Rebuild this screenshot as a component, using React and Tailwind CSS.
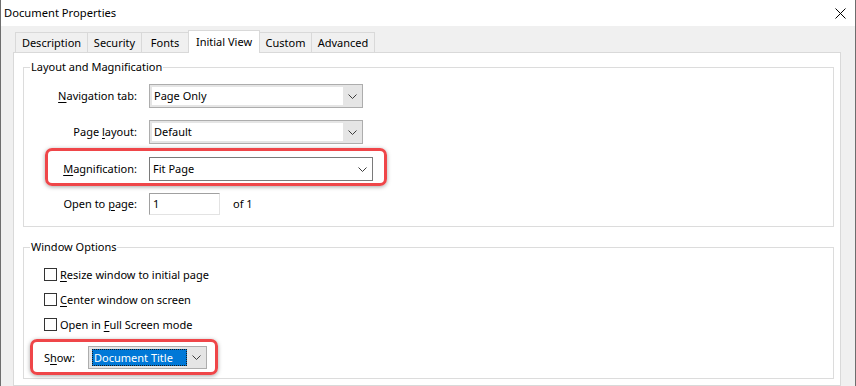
import React from "react";

const font = { fontFamily: '"Segoe UI", "Noto Sans", sans-serif' };

function Chevron() {
  return (
    <svg width="9" height="5" viewBox="0 0 9 5" className="block">
      <path d="M0.5 0.5 L4.5 4.5 L8.5 0.5" fill="none" stroke="#3c3c3c" strokeWidth="1" />
    </svg>
  );
}

function GraySelect({ value, width }) {
  return (
    <div className={`flex h-[24px] items-stretch border border-[#adadad] bg-[#e5e5e5] ${width}`}>
      <div className="my-[2px] ml-[2px] flex flex-1 items-center bg-white pl-[2px]">{value}</div>
      <div className="flex w-[19px] items-center justify-center">
        <Chevron />
      </div>
    </div>
  );
}

function U({ children }) {
  return <span className="underline underline-offset-[2px]">{children}</span>;
}

function Tab({ label, width, selected }) {
  if (selected) {
    return (
      <div
        className={`relative z-10 -mb-px -ml-px flex h-[23px] items-center justify-center border border-b-0 border-[#d9d9d9] bg-white pb-[1px] ${width}`}
      >
        {label}
      </div>
    );
  }
  return (
    <div
      className={`-ml-px flex h-[20px] items-center justify-center border border-b-0 border-[#d9d9d9] bg-[#f0f0f0] pt-[1px] first:ml-0 ${width}`}
    >
      {label}
    </div>
  );
}

function Checkbox({ children }) {
  return (
    <div className="flex h-[25px] items-center pl-[20px]">
      <div className="h-[13px] w-[13px] border border-[#333333] bg-white" />
      <span className="ml-[3px]">{children}</span>
    </div>
  );
}

export default function App() {
  return (
    <div
      style={font}
      className="relative flex h-[386px] w-[856px] flex-col overflow-hidden border-x border-[#6e6e6e] bg-[#f0f0f0] text-[11px] leading-[16px] text-black"
    >
      {/* Title bar */}
      <div className="flex h-[26px] shrink-0 items-center justify-between bg-white pl-[3px] pr-[9px]">
        <span className="text-[11.2px]">Document Properties</span>
        <svg width="11" height="11" viewBox="0 0 11 11" className="block">
          <path d="M0.5 0.5 L10.5 10.5 M10.5 0.5 L0.5 10.5" stroke="#000" strokeWidth="1" />
        </svg>
      </div>

      {/* Body */}
      <div className="flex flex-1 flex-col pl-[12px] pr-[14px] pt-[4px]">
        {/* Tabs */}
        <div className="flex h-[22px] shrink-0 items-end pl-[2px]">
          <Tab label="Description" width="w-[73px]" />
          <Tab label="Security" width="w-[55px]" />
          <Tab label="Fonts" width="w-[48px]" />
          <Tab label="Initial View" width="w-[72px]" selected />
          <Tab label="Custom" width="w-[53px]" />
          <Tab label="Advanced" width="w-[64px]" />
        </div>

        {/* Panel */}
        <div className="flex flex-1 flex-col border border-[#d9d9d9] bg-white pl-[9px] pr-[6px] pt-[6px]">
          {/* Layout and Magnification */}
          <fieldset className="border border-[#dcdcdc]">
            <legend className="ml-[6px] px-[1px] leading-[16px]">Layout and Magnification</legend>
            <div className="flex flex-col pb-[11px] pt-[9px]">
              <div className="flex h-[24px] items-center">
                <div className="w-[113px] text-right">
                  <U>N</U>avigation tab:
                </div>
                <div className="ml-[12px]">
                  <GraySelect value="Page Only" width="w-[214px]" />
                </div>
              </div>

              <div className="mt-[12px] flex h-[24px] items-center">
                <div className="w-[113px] text-right">
                  Page <U>l</U>ayout:
                </div>
                <div className="ml-[12px]">
                  <GraySelect value="Default" width="w-[214px]" />
                </div>
              </div>

              <div className="relative mt-[13px] flex h-[24px] items-center">
                <div className="w-[113px] text-right">
                  <U>M</U>agnification:
                </div>
                <div className="ml-[12px] flex h-[24px] w-[224px] items-center border border-[#7a7a7a] bg-white pl-[3px]">
                  <span className="flex-1">Fit Page</span>
                  <div className="flex w-[19px] items-center justify-center">
                    <Chevron />
                  </div>
                </div>
                <div className="pointer-events-none absolute left-[21px] top-[-9px] h-[38px] w-[342px] rounded-[7px] border-[3px] border-[#ef4649] shadow-[0_1px_4px_rgba(0,0,0,0.35)]" />
              </div>

              <div className="mt-[12px] flex h-[22px] items-center">
                <div className="w-[113px] text-right">
                  Open to <U>p</U>age:
                </div>
                <div className="ml-[12px] flex h-[22px] w-[71px] items-center border border-b-[#e3e3e3] border-l-[#a0a0a0] border-r-[#e3e3e3] border-t-[#a0a0a0] bg-white pl-[3px]">
                  1
                </div>
                <span className="ml-[13px]">of 1</span>
              </div>
            </div>
          </fieldset>

          {/* Window Options */}
          <fieldset className="mt-[12px] border border-[#dcdcdc]">
            <legend className="ml-[6px] px-[1px] leading-[16px]">Window Options</legend>
            <div className="flex flex-col pb-[9px] pt-[7px]">
              <Checkbox>
                <U>R</U>esize window to initial page
              </Checkbox>
              <Checkbox>
                <U>C</U>enter window on screen
              </Checkbox>
              <Checkbox>
                Open in <U>F</U>ull Screen mode
              </Checkbox>

              <div className="relative mt-[9px] flex h-[23px] items-center pl-[20px]">
                <div className="w-[44px]">
                  S<U>h</U>ow:
                </div>
                <div className="flex h-[23px] w-[119px] items-stretch border border-[#adadad] bg-[#e5e5e5]">
                  <div className="my-[2px] ml-[3px] flex w-[95px] items-center border border-dotted border-[#1a1a1a] bg-[#0078d7] pl-[1px] text-white">
                    Document Title
                  </div>
                  <div className="flex flex-1 items-center justify-center">
                    <Chevron />
                  </div>
                </div>
                <div className="pointer-events-none absolute left-[6px] top-[-7px] h-[36px] w-[188px] rounded-[7px] border-[3px] border-[#ef4649] shadow-[0_1px_4px_rgba(0,0,0,0.35)]" />
              </div>
            </div>
          </fieldset>
        </div>
      </div>
    </div>
  );
}
